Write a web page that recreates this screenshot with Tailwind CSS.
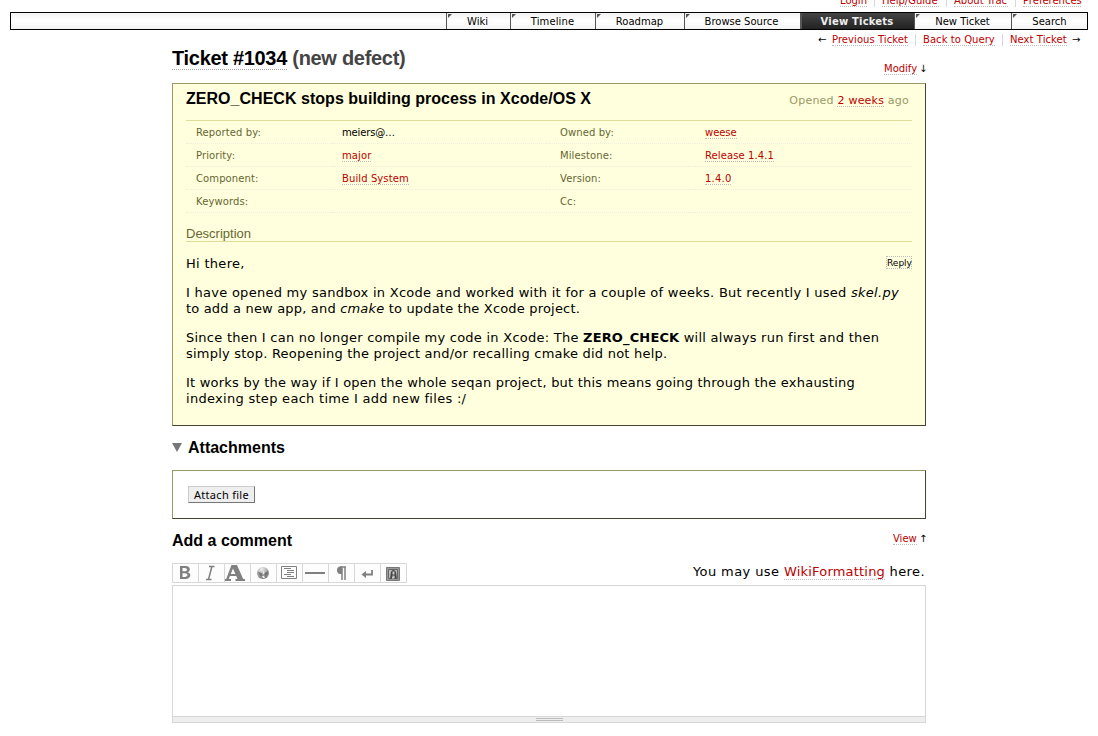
<!DOCTYPE html>
<html lang="en">
<head>
<meta charset="utf-8">
<title>Ticket #1034</title>
<script src="https://cdn.jsdelivr.net/npm/@tailwindcss/browser@4"></script>
</head>
<body class="h-[736px] overflow-hidden bg-white font-['DejaVu_Sans',sans-serif] text-[13px] leading-4 text-black">
<header class="relative h-[47px] text-[10px] leading-3">
  <div class="flex h-3 justify-end overflow-hidden pr-[17px] text-[#bb0000]">
    <div class="-mt-[5px] flex h-3 whitespace-nowrap">
      <a class="w-[27px] border-b border-dotted border-[#bbb]">Login</a>
      <i class="mx-[7px] w-px bg-[#d7d7d7]"></i>
      <a class="w-[57px] border-b border-dotted border-[#bbb]">Help/Guide</a>
      <i class="mx-[7px] w-px bg-[#d7d7d7]"></i>
      <a class="w-[54px] border-b border-dotted border-[#bbb]">About Trac</a>
      <i class="mx-[7px] w-px bg-[#d7d7d7]"></i>
      <a class="w-[58px] border-b border-dotted border-[#bbb]">Preferences</a>
    </div>
  </div>
  <nav class="mx-[10px] flex h-[18px] justify-end border border-black bg-linear-to-b from-[#f2f2f2] via-white to-[#f4f4f4] text-center leading-[18px] whitespace-nowrap *:h-4">
    <a class="relative w-16 border-l border-[#555] pr-0.5"><svg class="absolute top-px left-px size-1" viewBox="0 0 4 4"><path d="M0 0h4L0 4z" fill="#555"/></svg>Wiki</a>
    <a class="relative w-[85px] border-l border-[#555] pr-px tracking-[0.1px]"><svg class="absolute top-px left-px size-1" viewBox="0 0 4 4"><path d="M0 0h4L0 4z" fill="#555"/></svg>Timeline</a>
    <a class="relative w-[89px] border-l border-[#555] pr-px"><svg class="absolute top-px left-px size-1" viewBox="0 0 4 4"><path d="M0 0h4L0 4z" fill="#555"/></svg>Roadmap</a>
    <a class="relative w-[116px] border-l border-[#555] pr-0.5"><svg class="absolute top-px left-px size-1" viewBox="0 0 4 4"><path d="M0 0h4L0 4z" fill="#555"/></svg>Browse Source</a>
    <a class="w-[114px] border-l-2 border-[#555] bg-linear-to-b from-[#444] via-[#333] to-[#222] pr-0.5 font-bold tracking-[0.2px] text-[#eee]">View Tickets</a>
    <a class="relative w-[97px] border-l border-[#555] pr-px"><svg class="absolute top-px left-px size-1" viewBox="0 0 4 4"><path d="M0 0h4L0 4z" fill="#555"/></svg>New Ticket</a>
    <a class="relative w-[76px] border-l border-[#555]"><svg class="absolute top-px left-px size-1" viewBox="0 0 4 4"><path d="M0 0h4L0 4z" fill="#555"/></svg>Search</a>
  </nav>
  <div class="flex h-4 justify-end pt-1 pr-[16px] whitespace-nowrap">
    <span class="w-[14px]">←</span>
    <a class="h-3 w-[76px] border-b border-dotted border-[#bbb] tracking-[0.06px] text-[#bb0000]">Previous Ticket</a>
    <i class="mx-[7px] h-3 w-px bg-[#d7d7d7]"></i>
    <a class="h-3 w-[72px] border-b border-dotted border-[#bbb] tracking-[0.06px] text-[#bb0000]">Back to Query</a>
    <i class="mx-[7px] h-3 w-px bg-[#d7d7d7]"></i>
    <a class="h-3 w-[57px] border-b border-dotted border-[#bbb] tracking-[0.06px] text-[#bb0000]">Next Ticket</a>
    <span class="w-[15px] pl-[5px]">→</span>
  </div>
</header>
<main class="ml-[172px] w-[754px] whitespace-nowrap">
  <div class="flex h-9 justify-between">
    <h1 class="font-['Liberation_Sans',sans-serif] text-[20px] leading-[23px] font-bold tracking-[-0.3px] text-[#444]"><a class="inline-block h-[23px] border-b border-dotted border-[#aaa] text-black">Ticket #1034</a> (new defect)</h1>
    <div class="flex pt-4 text-[10px] leading-3"><a class="h-3 w-[33px] border-b border-dotted border-[#bbb] text-[#bb0000]">Modify</a><span class="w-[9px] pl-0.5">↓</span></div>
  </div>
  <section class="h-[343px] border border-t-[#996] border-r-[#443] border-b-[#443] border-l-[#996] bg-[#ffffdd] px-[13px]">
    <div class="flex h-9 justify-between">
      <h2 class="pt-[5px] font-['Liberation_Sans',sans-serif] text-[16px] leading-5 font-bold tracking-[0.03px]">ZERO_CHECK stops building process in Xcode/OS X</h2>
      <p class="pt-[10px] pr-[3px] text-[11px] leading-[13px] tracking-[0.22px] text-[#999966]">Opened <a class="inline-block h-[13px] border-b border-dotted border-[#bbb] text-[#bb0000]">2 weeks</a> ago</p>
    </div>
    <div class="grid grid-cols-[146px_218px_145px_1fr] border-t border-[#dd9] text-[10px] leading-6 tracking-[0.1px] text-[#666633] *:h-[23px] *:border-b *:border-dotted *:border-[#eeeedd]">
      <div class="pl-[10px]">Reported by:</div><div class="pl-[10px] tracking-[-0.15px] text-black">meiers@…</div><div class="pl-[10px]">Owned by:</div><div class="pt-[6px] pl-[10px] leading-3 text-[#bb0000]"><a class="inline-block h-3 border-b border-dotted border-[#bbb] tracking-[-0.05px]">weese</a></div>
      <div class="pl-[10px]">Priority:</div><div class="pt-[6px] pl-[10px] leading-3 text-[#bb0000]"><a class="inline-block h-3 border-b border-dotted border-[#bbb]">major</a></div><div class="pl-[10px]">Milestone:</div><div class="pt-[6px] pl-[10px] leading-3 text-[#bb0000]"><a class="inline-block h-3 border-b border-dotted border-[#bbb]">Release 1.4.1</a></div>
      <div class="pl-[10px]">Component:</div><div class="pt-[6px] pl-[10px] leading-3 text-[#bb0000]"><a class="inline-block h-3 border-b border-dotted border-[#bbb]">Build System</a></div><div class="pl-[10px]">Version:</div><div class="pt-[6px] pl-[10px] leading-3 text-[#bb0000]"><a class="inline-block h-3 border-b border-dotted border-[#bbb] tracking-[0.2px]">1.4.0</a></div>
      <div class="pl-[10px]">Keywords:</div><div></div><div class="pl-[10px]">Cc:</div><div></div>
    </div>
    <h3 class="mt-3 h-[17px] border-b border-[#dd9] font-['Liberation_Sans',sans-serif] text-[13px] leading-[18px] text-[#666633]">Description</h3>
    <div class="mt-[14px] flex justify-between">
      <p class="tracking-[0.3px]">Hi there,</p>
      <button class="h-[13px] w-[26px] border border-dotted border-[#bbb] text-[9px] leading-[13px]">Reply</button>
    </div>
    <p class="mt-[13px] *:block"><span class="tracking-[0.27px]">I have opened my sandbox in Xcode and worked with it for a couple of weeks. But recently I used <em>skel.py</em></span><span class="tracking-[0.18px]">to add a new app, and <em>cmake</em> to update the Xcode project.</span></p>
    <p class="mt-[13px] *:block"><span class="tracking-[0.25px]">Since then I can no longer compile my code in Xcode: The <strong class="tracking-[0.15px]">ZERO_CHECK</strong> will always run first and then</span><span class="tracking-[0.22px]">simply stop. Reopening the project and/or recalling cmake did not help.</span></p>
    <p class="mt-[13px] *:block"><span class="tracking-[0.22px]">It works by the way if I open the whole seqan project, but this means going through the exhausting</span><span class="tracking-[0.29px]">indexing step each time I add new files :/</span></p>
  </section>
  <h2 class="mt-3 flex h-5 items-center font-['Liberation_Sans',sans-serif] text-[16px] font-bold"><svg class="mr-[6px] mb-px h-[9px] w-[10px]" viewBox="0 0 10 9"><path d="M0 0h10L5 9z" fill="#777"/></svg>Attachments</h2>
  <section class="mt-3 h-[49px] border border-t-[#996] border-r-[#443] border-b-[#443] border-l-[#996] pt-[15px] pl-[15px]">
    <button class="block h-[17px] w-[67px] border border-t-[#ccc] border-r-[#777] border-b-[#777] border-l-[#ccc] bg-[#eee] font-['Noto_Sans',sans-serif] text-[11px] leading-4 tracking-[0.3px] text-black">Attach file</button>
  </section>
  <div class="mt-[11px] flex h-[33px] justify-between">
    <h2 class="font-['Liberation_Sans',sans-serif] text-[16px] leading-[22px] font-bold">Add a comment</h2>
    <div class="flex pt-[3px] text-[10px] leading-3"><a class="h-3 w-6 border-b border-dotted border-[#bbb] text-[#bb0000]">View</a><span class="w-[9px] pl-0.5">↑</span></div>
  </div>
  <div class="flex h-[22px] justify-between">
    <div class="h-5 w-[235px]">
      <svg width="235" height="20" viewBox="0 0 235 20" class="block">
        <path d="M.5.5h234v19H.5zM26.500 1v18M52.500 1v18M78.500 1v18M104.500 1v18M130.500 1v18M156.500 1v18M182.500 1v18M208.500 1v18" fill="#fdfdfd" stroke="#d7d7d7"/>
        <path fill="#808080" fill-rule="evenodd" d="M8 3h5.500C19 3 18.800 8.500 15.500 9.200 20 10 19 16 13.500 16H8zM10.500 5v3.300h2.200c3 0 3-3.300 0-3.300zM10.500 10.300V14h2.300c3.600 0 3.600-3.700 0-3.700z"/>
        <path fill="#808080" fill-rule="evenodd" d="M59.500 2h5.500l6.200 14H73v2h-9.500v-2h2l-1.300-3H58l-1.300 3H59v2h-6v-2h1.200zM61 5.500L58.800 11h4.500z"/>
        <g fill="none" stroke="#808080">
          <path d="M37 3.500h5.500M34 16.500h5.500M39.900 3.500L36.500 16.500" stroke-width="1.500"/>
          <path d="M109.500 3.500h15v12h-15zM112 5.500h7M115 7.500h7M115 9.500h7M112 11.500h7M115 13.500h7"/>
          <path d="M133 10h20" stroke-width="2"/>
          <path d="M170 4v13M173 4v13M168 4h6" stroke-width="1.500"/>
          <path d="M200 7v4.500h-8" stroke-width="1.800"/>
        </g>
        <path d="M170 3.500h-2c-4 0-4 7.500 0 7.500h2zM194 8v7l-4.500-3.500z" fill="#808080"/>
        <defs><radialGradient id="globe" cx=".4" cy=".2" r=".8"><stop offset="0" stop-color="#eee"/><stop offset="1" stop-color="#777"/></radialGradient></defs>
        <circle cx="91" cy="10" r="6" fill="url(#globe)"/><path d="M86 9l4 1 1 4-3-1zM92 10l4-2v3l-3 3z" fill="#777"/><path d="M91 8l2 2-2 1zM90 13h2l1 2h-2z" fill="#eee"/>
        <path d="M214.500 4.500h13v13h-13z" fill="#999" stroke="#777"/><path d="M216.500 6.500h9v9h-9z" fill="#bbb" stroke="#666"/>
        <path d="M218 15.500c1-3 0-7.500 3-8.500 4 0 3 5 4 8.500h-2l-.5-3h-2l-.5 3z" fill="#444"/><path d="M220.500 8.500h2v3h-2zM220 14h2v1.500h-2z" fill="#ccc"/>
      </svg>
    </div>
    <p class="pt-px pr-px tracking-[0.4px]">You may use <a class="inline-block h-4 border-b border-dotted border-[#bbb] tracking-[0.2px] text-[#bb0000]">WikiFormatting</a> here.</p>
  </div>
  <div class="flex h-[138px] flex-col border border-[#d7d7d7]">
    <div class="flex-1"></div>
    <div class="flex h-[6px] justify-center border-t border-[#d7d7d7] bg-[#eee] pt-px"><i class="h-[3px] w-[27px] border-y border-[#bbb]"></i></div>
  </div>
</main>
</body>
</html>
